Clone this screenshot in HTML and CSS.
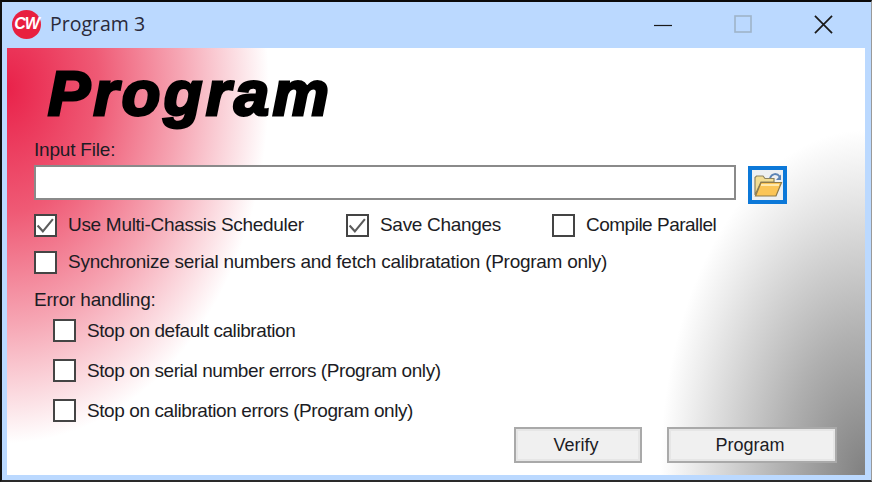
FILE: index.html
```html
<!DOCTYPE html>
<html lang="en">
<head>
<meta charset="utf-8">
<title>Program 3</title>
<link rel="stylesheet" href="styles.css">
</head>
<body>
<div class="window">
  <header class="titlebar">
    <div class="logo"><span class="logo-text">CW</span></div>
    <div class="title">Program 3</div>
    <div class="controls">
      <svg class="ctl ctl-min" width="18" height="18" viewBox="0 0 18 18"><path d="M0 9.500H18" stroke="#1a1a1a" stroke-width="1.200"/></svg>
      <svg class="ctl" width="18" height="18" viewBox="0 0 18 18"><rect x="1" y="1" width="16" height="16" fill="none" stroke="#9fb3c9" stroke-width="1.600"/></svg>
      <svg class="ctl" width="19" height="19" viewBox="0 0 20 20"><path d="M1 1L19 19M19 1L1 19" stroke="#1a1a1a" stroke-width="1.800"/></svg>
    </div>
  </header>
  <main class="content">
    <h1 class="heading">Program</h1>
    <div class="label label-input">Input File:</div>
    <div class="file-row">
      <div class="input"></div>
      <button class="browse" type="button">
        <svg width="30" height="28" viewBox="0 0 30 28">
          <path d="M17 7C19 2 24 2 27 6" fill="none" stroke="#5b83b5" stroke-width="2"/>
          <path d="M28 3.500V9H23Z" fill="#5b83b5"/>
          <path d="M2 24V6.500L3.500 5H10L12 7.500H21V11H8L2 24Z" fill="#f3dd93" stroke="#8d8361" stroke-width="1.200"/>
          <path d="M2.500 25L8 11.500H28.500L23 25Z" fill="#fbc557" stroke="#8d7a4b" stroke-width="1.200"/>
          <path d="M8 14H26" stroke="#ffe9ae" stroke-width="2"/>
        </svg>
      </button>
    </div>
    <div class="row row-options">
      <label class="check check-a"><span class="box"><svg class="tick" width="19" height="19" viewBox="0 0 18 18"><path d="M1.500 9L6.500 14.500L16 3" fill="none" stroke="#5c5c5c" stroke-width="2"/></svg></span>Use Multi-Chassis Scheduler</label>
      <label class="check check-b"><span class="box"><svg class="tick" width="19" height="19" viewBox="0 0 18 18"><path d="M1.500 9L6.500 14.500L16 3" fill="none" stroke="#5c5c5c" stroke-width="2"/></svg></span>Save Changes</label>
      <label class="check check-c"><span class="box"></span>Compile Parallel</label>
    </div>
    <div class="row row-sync">
      <label class="check check-sync"><span class="box"></span>Synchronize serial numbers and fetch calibratation (Program only)</label>
    </div>
    <div class="label label-error">Error handling:</div>
    <div class="errors">
      <label class="check"><span class="box"></span>Stop on default calibration</label>
      <label class="check"><span class="box"></span>Stop on serial number errors (Program only)</label>
      <label class="check"><span class="box"></span>Stop on calibration errors (Program only)</label>
    </div>
    <div class="actions">
      <button class="btn btn-verify" type="button">Verify</button>
      <button class="btn btn-program" type="button">Program</button>
    </div>
  </main>
</div>
</body>
</html>
```
FILE: styles.css
```css
* { box-sizing: border-box; }
html, body { margin: 0; padding: 0; width: 872px; height: 483px; overflow: hidden; background: #fff; }
body { font-family: "Liberation Sans", Arial, sans-serif; color: #1c1c24; }

.window {
  width: 872px;
  height: 482px;
  display: flex;
  flex-direction: column;
  border-top: 2px solid #0a0a0a;
  border-bottom: 2px solid #2a2a2a;
  border-left: 2px solid #111;
  border-right: 1px solid #999;
  background: #bbd9ff;
  padding: 0 6px 5px 5px;
}

.titlebar {
  height: 46px;
  flex: none;
  display: flex;
  align-items: center;
  margin: 0 -6px 0 -5px;
  padding: 0 0 2px 10px;
  background: #bbd9ff;
}
.logo {
  width: 29px;
  height: 29px;
  border-radius: 50%;
  background: #e8203f;
  display: flex;
  align-items: center;
  justify-content: center;
  flex: none;
}
.logo-text {
  font: italic bold 16px/1 "Liberation Sans", sans-serif;
  color: #fff;
  letter-spacing: -1px;
}
.title {
  margin-left: 9px;
  font: 19.500px/1 "Open Sans", sans-serif;
  color: #2a2a3a;
}
.controls {
  margin-left: auto;
  width: 179px;
  margin-right: 38px;
  display: flex;
  align-items: center;
  justify-content: space-between;
  flex: none;
}
.ctl-min { margin-top: 2px; }

.content {
  flex: 1;
  display: flex;
  flex-direction: column;
  padding-left: 27px;
  background:
    radial-gradient(ellipse 205px 345px at 100% 100%, #808080 0%, #b0b0b0 40%, #ececec 85%, rgba(255,255,255,0) 100%),
    radial-gradient(ellipse 262px 355px at 0 40px, #e9224a 0%, #ef5a75 35%, #f6a5b3 66%, #fce4e8 90%, rgba(255,255,255,0) 100%),
    #fff;
}

.heading {
  margin: 0;
  height: 88px;
  padding: 14px 0 0 14px;
  font: italic bold 63px/1 "Liberation Sans", sans-serif;
  -webkit-text-stroke: 3px #000;
  letter-spacing: 3.600px;
  color: #000;
}

.label { font-size: 19px; line-height: 22px; height: 22px; letter-spacing: -0.200px; }
.label-input { margin-top: 3px; }
.label-error { margin-top: 9px; }

.file-row { display: flex; align-items: flex-start; margin-top: 4px; height: 36px; }
.input {
  width: 702px;
  height: 35px;
  background: #fff;
  border: 2px solid #8a8a8a;
}
.browse {
  margin: 1px 0 0 12px;
  width: 39px;
  height: 38px;
  padding: 0;
  border: 4px solid #0c78d8;
  background: #eef0f2;
  display: flex;
  align-items: center;
  justify-content: center;
  flex: none;
}

.row { display: flex; align-items: center; }
.row-options { margin-top: 6px; height: 36px; }
.row-sync { height: 36px; margin-top: 1px; }
.check-a { width: 312px; }
.check-b { width: 206px; }

.check {
  display: flex;
  align-items: center;
  font-size: 19px;
  letter-spacing: -0.420px;
  white-space: nowrap;
}
.check-a, .check-b { letter-spacing: -0.300px; }
.check-c { letter-spacing: -0.500px; }
.check-sync { letter-spacing: -0.270px; }
.box {
  width: 23px;
  height: 23px;
  flex: none;
  margin-right: 11px;
  background: #fff;
  border: 2px solid #444;
  display: flex;
  align-items: center;
  justify-content: center;
}

.errors {
  display: flex;
  flex-direction: column;
  padding-left: 19px;
  margin-top: 8px;
  gap: 17px;
}

.actions {
  display: flex;
  justify-content: flex-end;
  gap: 25px;
  margin-top: 5px;
  padding-right: 28px;
}
.btn {
  height: 36px;
  padding: 0 4px 0 0;
  font: 18px/1 "Liberation Sans", sans-serif;
  color: #1c1c24;
  background: #f0f0f0;
  border: 2px solid #a9a9a9;
  box-shadow: inset 0 0 0 2px #e6e6e6;
}
.btn-verify { width: 128px; }
.btn-program { width: 170px; }
```
